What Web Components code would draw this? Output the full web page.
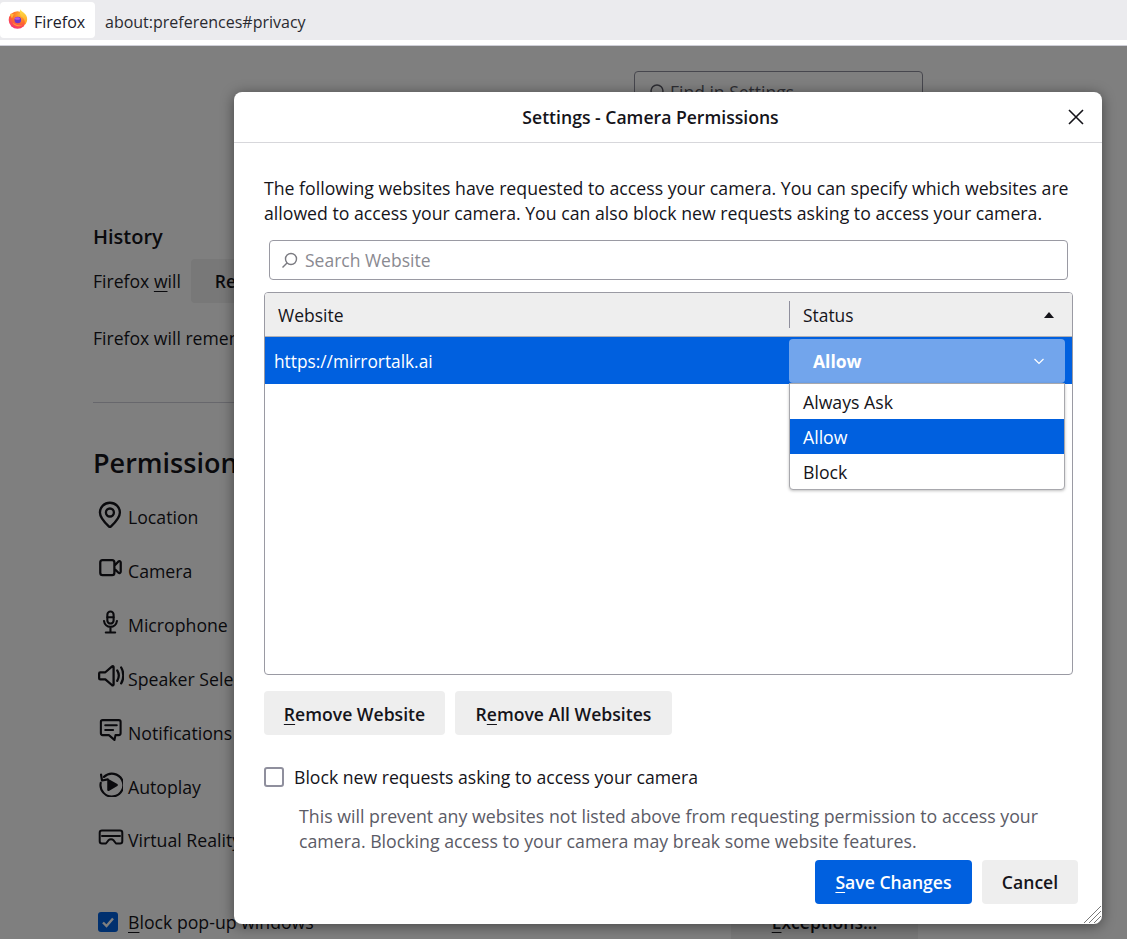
<!DOCTYPE html>
<html lang="en"><head><meta charset="utf-8"><title>Camera Permissions</title>
<style>
html,body{margin:0;height:100%;overflow:hidden;background:#fff}
body{font-family:"Open Sans","Noto Sans","Liberation Sans",sans-serif;color:#15141a;font-size:17px}
ff-app{width:1127px;height:939px}
</style></head><body>
<ff-app></ff-app>
<script>
const def=(name,css,html,init)=>{customElements.define(name,class extends HTMLElement{
  connectedCallback(){ if(this.shadowRoot) return; const r=this.attachShadow({mode:'open'}); r.innerHTML=`<style>${css}</style>${html}`; if(init) init(this,r);} });};
const I={
 pin:`<path d="M11 1.500c-4.800 0-8.500 3.700-8.500 8.300 0 5.200 5.100 9.400 8.500 12.700 3.400-3.300 8.500-7.500 8.500-12.700 0-4.600-3.700-8.300-8.500-8.300z"/><circle cx="11" cy="9.800" r="3.400"/>`,
 cam:`<path d="M14.500 15.200V6.600c0-1.300-.9-2.100-2-2.100H4c-1.200 0-2 .9-2 2.100v9c0 1.300.9 2.100 2 2.100h8.500c1.200 0 2-.8 2-2.100zM14.500 9.500l3.600-3.800c.8-.7 2-.2 2 1v8c0 1.200-1.200 1.700-2 1l-3.600-3.500"/>`,
 mic:`<rect x="8" y="1.500" width="6" height="11.500" rx="3"/><path d="M8 7h6M4.800 10.500c.4 3.500 3 5.700 6.200 5.700s5.800-2.200 6.200-5.700M11 16.200v5M6.500 21.500h9"/>`,
 spk:`<path d="M2 8.200h4.500l6-5.200c.6-.4 1.300 0 1.300.7v15.300c0 .7-.7 1.100-1.300.7l-6-5.200H2c-.6 0-1-.4-1-1V9.200c0-.6.4-1 1-1z" /><path d="M17 6.500c1.700 2.800 1.700 6.500 0 9.300M20.500 4c2.500 4 2.500 10 0 14"/>`,
 bell:`<path d="M3.500 2h15.500c1 0 1.700.8 1.700 1.700v11c0 1-.7 1.700-1.700 1.700h-3.200l-1 4.600-5.300-4.600H3.500c-1 0-1.700-.7-1.700-1.700v-11C1.800 2.800 2.500 2 3.500 2zM6 7h11M6 11.500h7.500"/>`,
 auto:`<path d="M5.500 4.500A10.500 10.500 0 1 1 2.500 10"/><path d="M2.800 2.300l.9 5.500 5.300-1" /><path d="M9.500 7.500v9l7.800-4.500z" fill="currentColor"/>`,
 vr:`<path d="M4 3.500h18c1.400 0 2.300.9 2.300 2.300v8.400c0 1.400-.9 2.300-2.300 2.300h-4l-2.600-3.300c-1.200-1.400-3.600-1.400-4.800 0L8 16.500H4c-1.400 0-2.300-.9-2.300-2.300V5.800c0-1.400.9-2.300 2.300-2.300zM4 9h18"/>`
};
def('ff-icon',`:host{display:inline-flex;width:var(--s,24px);height:var(--s,24px);color:inherit}svg{width:100%;height:100%;fill:none;stroke:currentColor;stroke-width:2;stroke-linejoin:round;stroke-linecap:round}`,`<svg></svg>`,(h,r)=>{
  const s=r.querySelector('svg');s.setAttribute('viewBox',h.getAttribute('vb')||'0 0 23 23');s.innerHTML=I[h.getAttribute('name')];});

def('ff-logo',`:host{display:block;width:20px;height:20px;margin-top:-2px}svg{display:block}`,`<svg width="20" height="20" viewBox="0 0 20 20">
<defs><radialGradient id="o" cx=".65" cy=".2" r=".95"><stop offset="0" stop-color="#ffb52e"/><stop offset=".5" stop-color="#ff6a2b"/><stop offset="1" stop-color="#f5208a"/></radialGradient>
<linearGradient id="y" x1="0" y1="0" x2="0" y2="1"><stop offset="0" stop-color="#ffe14a"/><stop offset="1" stop-color="#ff9a1f"/></linearGradient></defs>
<circle cx="9.500" cy="11" r="8.800" fill="url(#o)"/>
<path d="M12.500 .3c.6 2.600 5.300 3.500 6.500 8.200.7 3-.5 6-2.500 7.700 1-3.500-.3-7-3.500-8.700-1.100-2-1.700-4.700-.5-7.200z" fill="url(#y)"/>
<path d="M2 5c1.500-.3 3-.2 4 .5C5 7 4.500 8 4 9.500 3 8 2.300 6.500 2 5z" fill="#ffb43a"/>
<circle cx="9.800" cy="11" r="3.300" fill="#6f35c9"/><path d="M6.200 9.600c2-1.900 4.800-1.500 5.900-.1.400.9-1 1.300-2.800 1.300-1 0-2.600-.3-3.100-1.200z" fill="#b65ae0"/>
<path d="M4.500 13.500c2 4 6.500 4.600 9.800 2.800-3 .4-6.800-.3-9.800-2.800z" fill="#ff9a3a"/></svg>`);

def('ff-toolbar',`
:host{display:flex;flex-direction:column;background:#fff}
.bar{height:40px;background:#ebebee;display:flex;align-items:stretch;box-sizing:border-box;padding-top:2px;padding-bottom:2px}
.tab{width:95px;background:#fff;border-radius:4px;display:flex;align-items:center;gap:6px;padding-left:8px;box-sizing:border-box;font-size:16px;color:#20202a}
.tab span,.url span{position:relative;top:2px}
.url{padding-left:10px;display:flex;align-items:center;font-size:16px;color:#2a2a30}
.low{height:5px;background:#fff;border-bottom:1px solid #cfcfd8}`,
`<div class="bar"><div class="tab"><ff-logo></ff-logo><span>Firefox</span></div><div class="url"><span>about:preferences#privacy</span></div></div><div class="low"></div>`);

def('ff-perm-row',`:host{display:flex;align-items:center;height:54px;color:#15141a;font-size:17.700px}
:host([short]){height:52px}
.i{width:35px;height:30px;display:flex;align-items:center;justify-content:center;margin-top:-6px;flex:none}`,`<div class="i"><slot name="icon"></slot></div><span><slot></slot></span>`);

def('ff-settings',`
:host{display:block;height:893px;overflow:hidden;background:#fff;position:relative;box-sizing:border-box;padding:25px 0 0 93px;color:#15141a}
.find{margin-left:541px;width:289px;height:42px;box-sizing:border-box;border:1px solid #8f8f9d;border-radius:4px;display:flex;align-items:center;padding:0 14px;gap:5px;font-size:17.500px;color:#5b5b66}
.find svg{width:16px;height:16px;fill:none;stroke:#5b5b66;stroke-width:1.500;flex:none}
h3{margin:0;font-size:20px;font-weight:600;line-height:28px;margin-top:110px}
.hist{display:flex;align-items:center;gap:10px;margin-top:8px;font-size:17.600px;height:44px}
.hist b{width:300px;height:44px;background:#f0f0f0;border-radius:4px;font-weight:600;display:flex;align-items:center;padding-left:24px;box-sizing:border-box;font-size:17.500px}
u{text-underline-offset:3px;text-decoration-thickness:1px}
.rem{margin-top:23px;font-size:17.600px;line-height:25px}
hr{border:0;border-top:1px solid #cfcfd8;margin:51px 0 0;width:900px}
h2{margin:37px 0 4px;font-size:27px;font-weight:600;line-height:46px}
.perm{margin-left:0;width:300px}
.pop{display:flex;align-items:center;gap:10px;margin-top:36px;margin-left:5px;font-size:17.700px;height:40px;position:relative}
.cb{width:20px;height:20px;background:#0060df;border-radius:3px;display:flex;align-items:center;justify-content:center;flex:none}
.cb svg{width:14px;height:14px;fill:none;stroke:#fff;stroke-width:2.400}
.ex{margin-left:593px;width:187px;height:44px;background:#f0f0f0;border-radius:4px;flex:none;display:flex;align-items:center;justify-content:center;font-weight:600;font-size:17.500px}
`,`<div class="find"><svg viewBox="0 0 16 16"><circle cx="8" cy="7" r="6"/><path d="M4 12l-3 3"/></svg><span>Find in Settings</span></div>
<h3>History</h3>
<div class="hist"><span>Firefox <u>w</u>ill</span><b>Remember history</b></div>
<div class="rem">Firefox will remember</div>
<hr>
<h2>Permissions</h2>
<div class="perm">
<ff-perm-row><ff-icon slot="icon" name="pin" style="--s:27px"></ff-icon>Location</ff-perm-row>
<ff-perm-row><ff-icon slot="icon" name="cam" style="--s:26px"></ff-icon>Camera</ff-perm-row>
<ff-perm-row><ff-icon slot="icon" name="mic" style="--s:24px"></ff-icon>Microphone</ff-perm-row>
<ff-perm-row><ff-icon slot="icon" name="spk" style="--s:26px"></ff-icon>Speaker Selection</ff-perm-row>
<ff-perm-row><ff-icon slot="icon" name="bell" style="--s:24px"></ff-icon>Notifications</ff-perm-row>
<ff-perm-row><ff-icon slot="icon" name="auto" style="--s:25px"></ff-icon>Autoplay</ff-perm-row>
<ff-perm-row short><ff-icon slot="icon" name="vr" vb="0 0 26 20" style="--s:26px"></ff-icon>Virtual Reality</ff-perm-row>
</div>
<div class="pop"><div class="cb"><svg viewBox="0 0 14 14"><path d="M2 7.500l3.500 3.500L12 3.500"/></svg></div><span style="white-space:nowrap;width:0"><u>B</u>lock pop-up windows</span><div class="ex"><span><u>E</u>xceptions...</span></div></div>`);

def('ff-button',`:host{display:inline-flex;align-items:center;justify-content:center;height:44px;border-radius:4px;background:#eeeeee;color:#15141a;font-weight:600;font-size:17.600px;box-sizing:border-box;white-space:nowrap}
:host([primary]){background:#0060df;color:#fff}
:host([low]){padding-top:1px}`,`<slot></slot>`);

def('ff-site-table',`
:host{display:block;position:relative;height:383px;box-sizing:border-box;border:1px solid #9a9aa3;border-radius:4px;background:#fff;font-size:17.500px}
.head{height:43px;background:#eeeeee;border-bottom:1px solid #b0b0b5;display:flex;align-items:center;border-radius:3px 3px 0 0}
.w{width:525px;padding-left:13px;box-sizing:border-box;border-right:1px solid #8f8f9d;height:27px;display:flex;align-items:center;flex:none}
.s{flex:1;padding-left:13px;display:flex;align-items:center;justify-content:space-between;padding-right:18px;font-size:17.400px}
.tri{width:0;height:0;border:5.500px solid transparent;border-top:0;border-bottom:6px solid #15141a}
.row{height:47px;background:#0060df;color:#fff;display:flex;align-items:center;padding-left:9px;position:relative;font-size:17.300px}
.row>span{padding-top:2px}
.sel{position:absolute;left:524px;top:2px;width:276px;height:44px;background:#72a5ec;border-radius:4px;display:flex;align-items:center;justify-content:space-between;padding:0 20px 0 24px;box-sizing:border-box;font-weight:700;color:#fff;font-size:17.500px}
.sel svg{width:12px;height:12px;fill:none;stroke:#fff;stroke-width:1.200}
.menu{position:absolute;left:524px;top:90px;width:276px;height:107px;background:#fff;border:1px solid #a8a8ad;border-radius:0 0 4px 4px;box-sizing:border-box;box-shadow:0 1px 3px rgba(0,0,0,.25);z-index:2;color:#15141a;font-size:17.700px}
.menu div{height:35px;display:flex;align-items:center;padding-left:13px}
.menu .on{background:#0060df;color:#fff}`,
`<div class="head"><div class="w">Website</div><div class="s"><span>Status</span><i class="tri"></i></div></div>
<div class="row"><span>https://mirrortalk.ai</span><div class="sel"><span>Allow</span><svg viewBox="0 0 12 12"><path d="M1.500 4l4.500 4.500L10.500 4"/></svg></div></div>
<div class="menu"><div>Always Ask</div><div class="on">Allow</div><div>Block</div></div>`);

def('ff-dialog',`
:host{position:absolute;left:234px;top:92px;width:868px;height:832px;background:#fff;border-radius:8px;box-shadow:0 2px 14px rgba(0,0,0,.45);display:flex;flex-direction:column;overflow:hidden;color:#15141a;font-size:17.700px}
.hd{height:51px;border-bottom:1px solid #d7d7db;box-sizing:border-box;display:flex;align-items:center;flex:none}
.t{flex:1;text-align:center;font-weight:600;font-size:17.600px;padding-left:1px}
.x{width:36px;flex:none;display:flex;align-items:center;justify-content:center}
.x svg{width:16px;height:16px;margin-left:-16px;flex:none;stroke:#15141a;stroke-width:1.600;fill:none}
.bd{padding:33px 30px 0 30px;flex:1;display:flex;flex-direction:column;position:relative}
p{margin:0;line-height:25px;white-space:nowrap}
.search{margin:14px 4px 0 5px;height:40px;border:1px solid #9a9aa3;border-radius:4px;box-sizing:border-box;display:flex;align-items:center;padding-left:11px;gap:7px;color:#8a8a91;font-size:17.500px}
.search svg{width:17px;height:17px;fill:none;stroke:#7a7a80;stroke-width:1.400;flex:none}
ff-site-table{margin:12px -1px 0 0}
.btns{display:flex;gap:10px;margin-top:16px}
.chk{display:flex;align-items:center;gap:10px;margin-top:32px;height:20px;font-size:17.650px}
.box{width:20px;height:20px;box-sizing:border-box;border:2px solid #8f8f9d;border-radius:3px;flex:none}
.note{margin:17px 0 0 35px;color:#5b5b66;font-size:17.750px}
.foot{display:flex;justify-content:flex-end;gap:10px;position:absolute;right:24px;bottom:20px}
.grip{position:absolute;right:0;bottom:0;width:19px;height:19px}
u{text-underline-offset:3px;text-decoration-thickness:1px}
`,`<div class="hd"><div class="t">Settings - Camera Permissions</div><div class="x"><svg viewBox="0 0 16 16"><path d="M1 1l14 14M15 1L1 15"/></svg></div></div>
<div class="bd">
<p>The following websites have requested to access your camera. You can specify which websites are<br>allowed to access your camera. You can also block new requests asking to access your camera.</p>
<div class="search"><svg viewBox="0 0 17 17"><circle cx="10" cy="7" r="5.500"/><path d="M6 11l-4.500 4.500"/></svg><span>Search Website</span></div>
<ff-site-table></ff-site-table>
<div class="btns"><ff-button low style="width:181px"><span><u>R</u>emove Website</span></ff-button><ff-button low style="width:217px"><span>R<u>e</u>move All Websites</span></ff-button></div>
<div class="chk"><div class="box"></div><span>Block new requests asking to access your camera</span></div>
<p class="note">This will prevent any websites not listed above from requesting permission to access your<br>camera. Blocking access to your camera may break some website features.</p>
<div class="foot"><ff-button primary style="width:157px"><span><u>S</u>ave Changes</span></ff-button><ff-button style="width:96px">Cancel</ff-button></div>
<svg class="grip" viewBox="0 0 19 19" fill="none" stroke="#7a7a7a" stroke-width="1"><path d="M18 1L1 18M18 6L6 18M18 11L11 18M18 15.500L15.500 18"/></svg>
</div>`);

def('ff-app',`:host{display:block;position:relative;overflow:hidden}
.ov{position:absolute;left:0;right:0;top:46px;bottom:0;background:rgba(0,0,0,.5)}`,
`<ff-toolbar></ff-toolbar><ff-settings></ff-settings><div class="ov"></div><ff-dialog></ff-dialog>`);
</script>
</body></html>
